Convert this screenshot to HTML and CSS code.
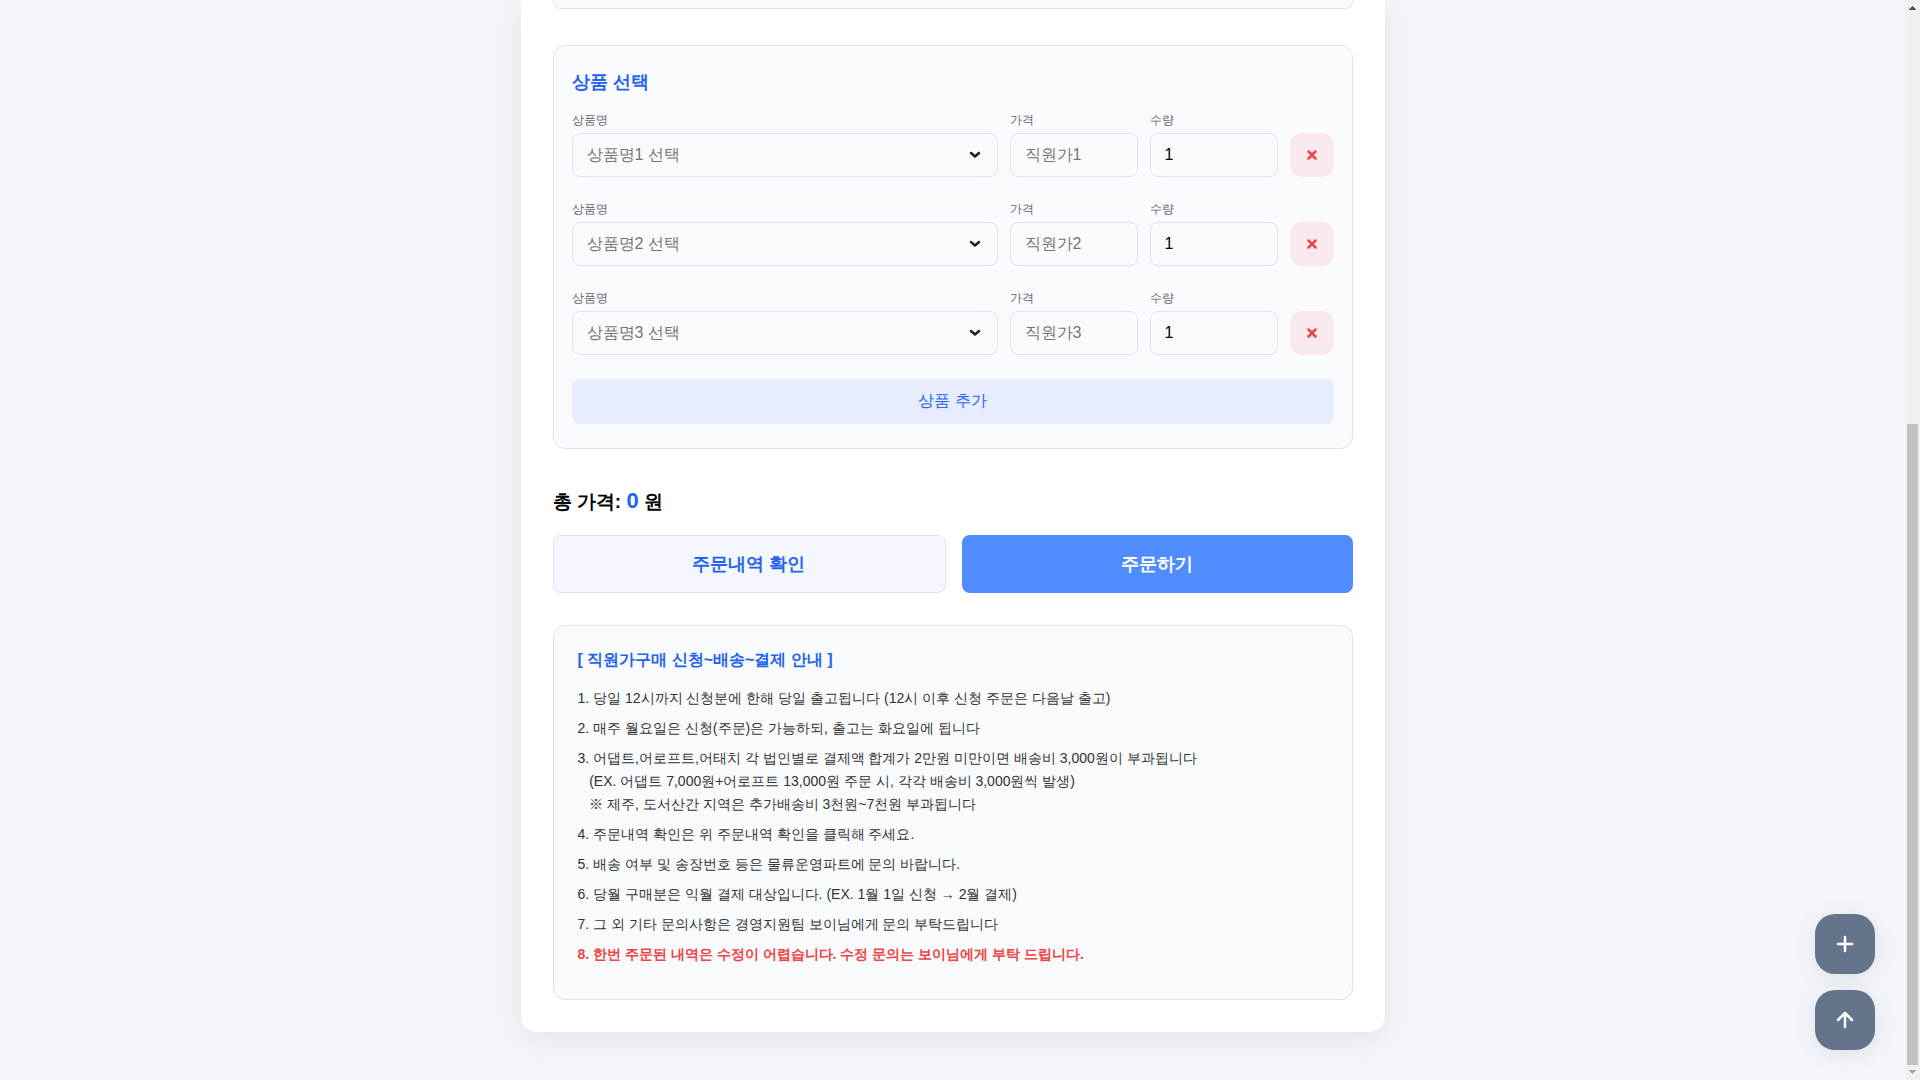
FILE: index.html
```html
<!DOCTYPE html>
<html lang="ko">
<head>
    <meta charset="UTF-8">
    <meta name="viewport" content="width=device-width, initial-scale=1.0">
    <title>직원가 구매 신청</title>
    <link rel="stylesheet" href="styles.css">
</head>
<body>
    <main class="container">
        <div class="info-section"></div>

        <section class="product-section">
            <h2>상품 선택</h2>

            <div class="product-row">
                <div class="field">
                    <label for="product1">상품명</label>
                    <div class="select-box">
                        <select id="product1">
                            <option>상품명1 선택</option>
                        </select>
                        <svg class="chevron" viewBox="0 0 12 8"><path d="M2 2 L6 5.5 L10 2"/></svg>
                    </div>
                </div>
                <div class="field">
                    <label for="price1">가격</label>
                    <input type="text" id="price1" placeholder="직원가1" readonly>
                </div>
                <div class="field">
                    <label for="quantity1">수량</label>
                    <input type="number" id="quantity1" value="1" min="1">
                </div>
                <button type="button" class="remove-btn" aria-label="삭제">
                    <svg viewBox="0 0 12 12"><path d="M2.5 2.5 L9.5 9.5 M9.5 2.5 L2.5 9.5"/></svg>
                </button>
            </div>

            <div class="product-row">
                <div class="field">
                    <label for="product2">상품명</label>
                    <div class="select-box">
                        <select id="product2">
                            <option>상품명2 선택</option>
                        </select>
                        <svg class="chevron" viewBox="0 0 12 8"><path d="M2 2 L6 5.5 L10 2"/></svg>
                    </div>
                </div>
                <div class="field">
                    <label for="price2">가격</label>
                    <input type="text" id="price2" placeholder="직원가2" readonly>
                </div>
                <div class="field">
                    <label for="quantity2">수량</label>
                    <input type="number" id="quantity2" value="1" min="1">
                </div>
                <button type="button" class="remove-btn" aria-label="삭제">
                    <svg viewBox="0 0 12 12"><path d="M2.5 2.5 L9.5 9.5 M9.5 2.5 L2.5 9.5"/></svg>
                </button>
            </div>

            <div class="product-row">
                <div class="field">
                    <label for="product3">상품명</label>
                    <div class="select-box">
                        <select id="product3">
                            <option>상품명3 선택</option>
                        </select>
                        <svg class="chevron" viewBox="0 0 12 8"><path d="M2 2 L6 5.5 L10 2"/></svg>
                    </div>
                </div>
                <div class="field">
                    <label for="price3">가격</label>
                    <input type="text" id="price3" placeholder="직원가3" readonly>
                </div>
                <div class="field">
                    <label for="quantity3">수량</label>
                    <input type="number" id="quantity3" value="1" min="1">
                </div>
                <button type="button" class="remove-btn" aria-label="삭제">
                    <svg viewBox="0 0 12 12"><path d="M2.5 2.5 L9.5 9.5 M9.5 2.5 L2.5 9.5"/></svg>
                </button>
            </div>

            <button type="button" class="add-btn">상품 추가</button>
        </section>

        <div class="total">총 가격: <span class="total-price">0</span> 원</div>

        <div class="button-group">
            <button type="button" class="btn check-btn">주문내역 확인</button>
            <button type="submit" class="btn order-btn">주문하기</button>
        </div>

        <section class="notice">
            <h3>[ 직원가구매 신청~배송~결제 안내 ]</h3>
            <ul>
                <li>1. 당일 12시까지 신청분에 한해 당일 출고됩니다 (12시 이후 신청 주문은 다음날 출고)</li>
                <li>2. 매주 월요일은 신청(주문)은 가능하되, 출고는 화요일에 됩니다</li>
                <li>3. 어댑트,어로프트,어태치 각 법인별로 결제액 합계가 2만원 미만이면 배송비 3,000원이 부과됩니다<br>
                    &nbsp;&nbsp;&nbsp;(EX. 어댑트 7,000원+어로프트 13,000원 주문 시, 각각 배송비 3,000원씩 발생)<br>
                    &nbsp;&nbsp;&nbsp;※ 제주, 도서산간 지역은 추가배송비 3천원~7천원 부과됩니다</li>
                <li>4. 주문내역 확인은 위 주문내역 확인을 클릭해 주세요.</li>
                <li>5. 배송 여부 및 송장번호 등은 물류운영파트에 문의 바랍니다.</li>
                <li>6. 당월 구매분은 익월 결제 대상입니다. (EX. 1월 1일 신청 → 2월 결제)</li>
                <li>7. 그 외 기타 문의사항은 경영지원팀 보이님에게 문의 부탁드립니다</li>
                <li class="warning">8. 한번 주문된 내역은 수정이 어렵습니다. 수정 문의는 보이님에게 부탁 드립니다.</li>
            </ul>
        </section>
    </main>

    <div class="floating-buttons">
        <button type="button" class="fab" aria-label="상품 추가">
            <svg viewBox="0 0 24 24"><path d="M12 5 V19 M5 12 H19"/></svg>
        </button>
        <button type="button" class="fab" aria-label="맨 위로">
            <svg viewBox="0 0 24 24"><path d="M12 19 V5 M5 12 L12 5 L19 12"/></svg>
        </button>
    </div>

    <div class="scrollbar" aria-hidden="true">
        <svg class="arrow" viewBox="0 0 7 4"><path d="M3 0h1v1h1v1h1v1h1v1H0V3h1V2h1V1h1z"/></svg>
        <div class="thumb"></div>
        <svg class="arrow disabled" viewBox="0 0 7 4"><path d="M0 0h7v1H6v1H5v1H4v1H3V3H2V2H1V1H0z"/></svg>
    </div>
</body>
</html>
```
FILE: styles.css
```css
* {
    box-sizing: border-box;
}
body {
    margin: 0;
    padding: 0 15px 48px 0;
    font-family: 'Liberation Sans', sans-serif;
    background-color: #f4f6fb;
    color: #000;
}
h2, h3, ul {
    margin: 0;
    padding: 0;
}
button, input, select {
    font-family: inherit;
    font-size: 16px;
}
button {
    padding: 0;
    border: none;
    cursor: pointer;
}
svg {
    display: block;
    fill: none;
    stroke: currentColor;
    stroke-width: 2.5;
    stroke-linecap: round;
    stroke-linejoin: round;
}
.container {
    max-width: 864px;
    margin: 0 auto;
    padding: 0 32px 32px;
    background: #fff;
    border-radius: 0 0 16px 16px;
    box-shadow: 0 8px 32px rgba(0, 0, 0, 0.08);
}
.info-section {
    height: 9px;
    margin-bottom: 36px;
    background: #f9fafc;
    border: 1px solid #e0e3ed;
    border-top: none;
    border-radius: 0 0 8px 8px;
}
.product-section {
    padding: 24px 18px;
    background: #fafbff;
    border: 1px solid #e0e3ed;
    border-radius: 12px;
}
.product-section h2 {
    margin-bottom: 18px;
    font-size: 18px;
    line-height: 24px;
    color: #2563eb;
}
.product-row {
    display: grid;
    grid-template-columns: 1fr 128px 128px 44px;
    gap: 12px;
    align-items: end;
    margin-bottom: 24px;
}
.field label {
    display: block;
    margin-bottom: 5px;
    font-size: 12px;
    line-height: 16px;
    color: #666;
}
.field input, .field select {
    display: block;
    width: 100%;
    height: 44px;
    padding: 0 14px;
    background: #f9fafc;
    border: 1px solid #e0e3ed;
    border-radius: 8px;
    color: #000;
}
.field select {
    appearance: none;
    padding-bottom: 2px;
    color: #757575;
}
.field input::placeholder {
    color: #757575;
}
.select-box {
    position: relative;
}
.chevron {
    position: absolute;
    top: 18px;
    right: 17px;
    width: 12px;
    height: 8px;
    color: #222;
    pointer-events: none;
}
.remove-btn {
    display: flex;
    justify-content: center;
    align-items: center;
    width: 44px;
    height: 44px;
    background: #f9e8ec;
    border-radius: 12px;
    color: #ef4444;
}
.remove-btn svg {
    width: 12px;
    height: 12px;
}
.add-btn {
    display: block;
    width: 100%;
    height: 45px;
    background: #e7edff;
    border-radius: 8px;
    color: #2563eb;
}
.total {
    margin: 39px 0 20px;
    font-size: 19px;
    line-height: 26px;
    font-weight: bold;
}
.total-price {
    font-size: 22px;
    color: #2563eb;
}
.button-group {
    display: flex;
    gap: 16px;
    margin-bottom: 32px;
}
.btn {
    flex: 1;
    height: 58px;
    border-radius: 8px;
    font-size: 18px;
    font-weight: bold;
}
.check-btn {
    background: #f4f7ff;
    border: 1px solid #e0e3ed;
    color: #2563eb;
}
.order-btn {
    background: #4f8cff;
    color: #fff;
}
.notice {
    padding: 24px 24px 26px;
    background: #f9fafc;
    border: 1px solid #e0e3ed;
    border-radius: 12px;
}
.notice h3 {
    margin-bottom: 17px;
    font-size: 16px;
    line-height: 20px;
    color: #2563eb;
}
.notice ul {
    list-style: none;
}
.notice li {
    margin-bottom: 7px;
    font-size: 14px;
    line-height: 23px;
    color: #333;
}
.notice .warning {
    font-weight: bold;
    color: #ef4444;
}
.floating-buttons {
    position: fixed;
    right: 45px;
    bottom: 30px;
    display: flex;
    flex-direction: column;
    gap: 16px;
}
.fab {
    display: flex;
    justify-content: center;
    align-items: center;
    width: 60px;
    height: 60px;
    background: #64748b;
    border-radius: 20px;
    box-shadow: 0 4px 24px rgba(0, 0, 0, 0.1);
    color: #fff;
}
.fab svg {
    width: 24px;
    height: 24px;
}
.scrollbar {
    position: fixed;
    top: 0;
    right: 0;
    bottom: 0;
    display: flex;
    flex-direction: column;
    justify-content: space-between;
    align-items: center;
    width: 15px;
    padding: 6px 0;
    background: #f0f0f0;
}
.scrollbar .thumb {
    width: 11px;
    height: 60%;
    margin-top: auto;
    margin-bottom: 5px;
    background: #c1c1c1;
}
.arrow {
    width: 7px;
    height: 4px;
    fill: #505050;
    stroke: none;
}
.arrow.disabled {
    fill: #a3a3a3;
}
```
